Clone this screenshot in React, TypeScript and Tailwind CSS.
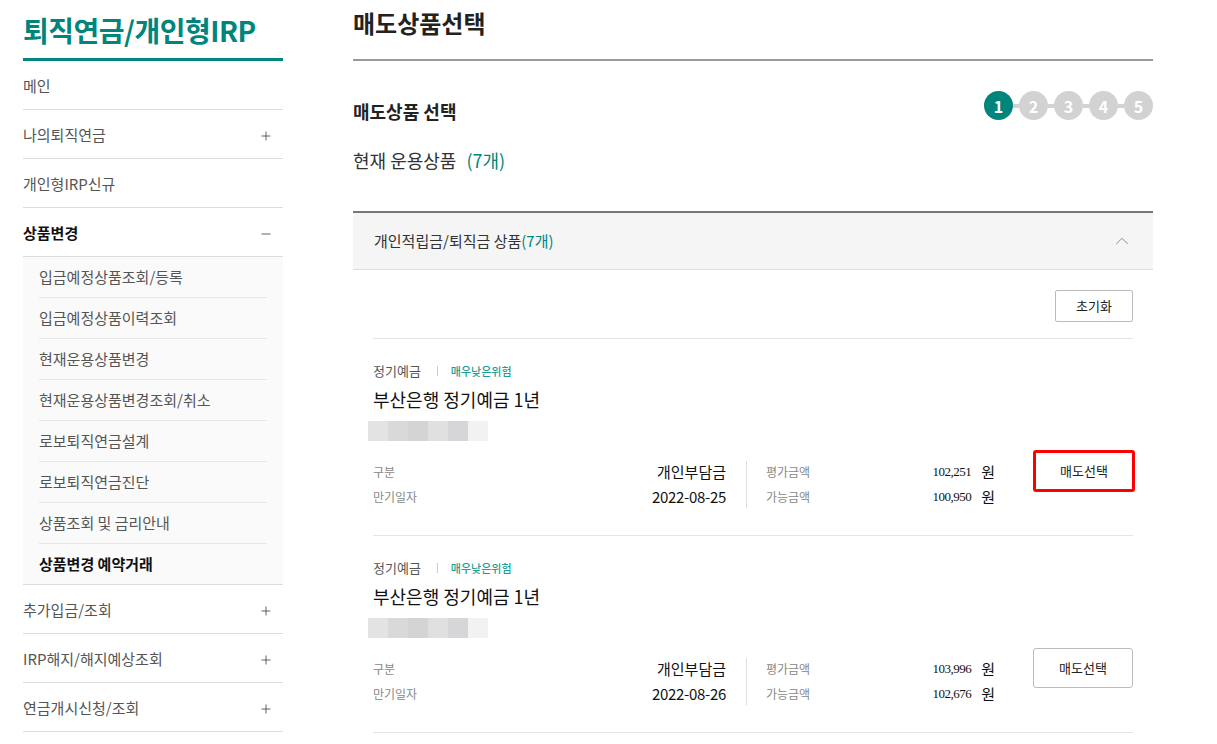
import { Plus, Minus, ChevronUp } from 'lucide-react';

const font = { fontFamily: '"Noto Sans CJK KR", "Noto Sans", sans-serif' };

const topMenu = [
  { label: '메인', icon: null },
  { label: '나의퇴직연금', icon: 'plus' },
  { label: '개인형IRP신규', icon: null },
];

const subMenu = [
  '입금예정상품조회/등록',
  '입금예정상품이력조회',
  '현재운용상품변경',
  '현재운용상품변경조회/취소',
  '로보퇴직연금설계',
  '로보퇴직연금진단',
  '상품조회 및 금리안내',
  '상품변경 예약거래',
];

const bottomMenu = ['추가입금/조회', 'IRP해지/해지예상조회', '연금개시신청/조회'];

const products = [
  { date: '2022-08-25', evalAmt: '102,251', availAmt: '100,950', highlight: true },
  { date: '2022-08-26', evalAmt: '103,996', availAmt: '102,676', highlight: false },
];

const blur = ['bg-[#e3e3e3]', 'bg-[#d9d9d9]', 'bg-[#d4d4d4]', 'bg-[#e0e0e0]', 'bg-[#d6d6d8]', 'bg-[#f1f2f1]'];

function MenuRow({ label, icon, bold }: { label: string; icon?: string | null; bold?: boolean }) {
  return (
    <div className="flex h-[49px] items-center justify-between border-b border-[#dddddd] pr-[10px] pt-[3px]">
      <span className={bold ? 'text-[15px] font-bold text-[#111]' : 'text-[15px] text-[#555]'}>{label}</span>
      {icon === 'plus' && <Plus size={14} strokeWidth={1.3} className="text-[#333]" />}
      {icon === 'minus' && <Minus size={14} strokeWidth={1.3} className="text-[#333]" />}
    </div>
  );
}

function Sidebar() {
  return (
    <aside className="w-[260px] shrink-0">
      <h1 className="pt-[10px] text-[28px] font-bold leading-[40px] tracking-[-0.5px] text-[#00857d]">퇴직연금/개인형IRP</h1>
      <div className="mt-[8px] h-[3px] bg-[#00857d]" />
      {topMenu.map((m) => (
        <MenuRow key={m.label} label={m.label} icon={m.icon} />
      ))}
      <MenuRow label="상품변경" icon="minus" bold />
      <div className="border-b border-[#dddddd] bg-[#fafafa] px-[16px]">
        {subMenu.map((s, i) => (
          <div
            key={s}
            className={`flex items-center text-[15px] ${i < subMenu.length - 1 ? 'h-[41px] border-b border-[#e6e6e6] text-[#555]' : 'h-[40px] font-bold text-[#111]'}`}
          >
            {s}
          </div>
        ))}
      </div>
      {bottomMenu.map((m) => (
        <MenuRow key={m} label={m} icon="plus" />
      ))}
    </aside>
  );
}

function Steps() {
  return (
    <div className="flex items-center">
      {[1, 2, 3, 4, 5].map((n, i) => (
        <div key={n} className="flex items-center">
          {i > 0 && <div className="h-[4px] w-[6px] bg-[#d2d2d2]" />}
          <div
            className={`flex h-[29px] w-[29px] items-center justify-center rounded-full text-[16px] font-bold text-white ${n === 1 ? 'bg-[#00857d]' : 'bg-[#d2d2d2]'}`}
          >
            {n}
          </div>
        </div>
      ))}
    </div>
  );
}

function Product({ date, evalAmt, availAmt, highlight }: (typeof products)[number]) {
  return (
    <div className="flex h-[197px] flex-col border-b border-[#e5e5e5] pt-[22px]">
      <div className="flex items-center text-[13px] leading-[20px]">
        <span className="text-[#555]">정기예금</span>
        <span className="ml-[16px] mr-[13px] h-[10px] w-px bg-[#cccccc]" />
        <span className="text-[11px] font-medium text-[#1a9f93]">매우낮은위험</span>
      </div>
      <div className="mt-[5px] text-[18px] leading-[26px] text-[#111]">부산은행 정기예금 1년</div>
      <div className="ml-[-5px] mt-[9px] flex h-[20px]">
        {blur.map((b, i) => (
          <div key={i} className={`h-[20px] w-[20px] ${b}`} />
        ))}
      </div>
      <div className="mt-[20px] flex items-start">
        <div className="flex w-[374px] flex-col gap-[5px] border-r border-[#dddddd] py-[1px] pr-[20px]">
          <div className="flex h-[20px] items-center justify-between">
            <span className="text-[12px] text-[#888]">구분</span>
            <span className="text-[15px] text-[#111]">개인부담금</span>
          </div>
          <div className="flex h-[20px] items-center justify-between">
            <span className="text-[12px] text-[#888]">만기일자</span>
            <span className="text-[15px] tracking-[-0.3px] text-[#111]">{date}</span>
          </div>
        </div>
        <div className="flex w-[248px] flex-col gap-[5px] py-[1px] pl-[19px]">
          <div className="flex h-[20px] items-center">
            <span className="text-[12px] text-[#888]">평가금액</span>
            <span className="ml-auto text-[13px] tracking-[-0.5px] text-[#111]" style={{ fontFamily: '"Liberation Serif", serif' }}>{evalAmt}</span>
            <span className="ml-[10px] text-[15px] text-[#111]">원</span>
          </div>
          <div className="flex h-[20px] items-center">
            <span className="text-[12px] text-[#888]">가능금액</span>
            <span className="ml-auto text-[13px] tracking-[-0.5px] text-[#111]" style={{ fontFamily: '"Liberation Serif", serif' }}>{availAmt}</span>
            <span className="ml-[10px] text-[15px] text-[#111]">원</span>
          </div>
        </div>
        <div className={highlight ? 'ml-auto mr-[-2px] mt-[-11px]' : 'ml-auto mt-[-10px]'}>
          <button
            className={`flex items-center justify-center rounded-[3px] bg-white text-[13px] text-[#222] ${highlight ? 'h-[42px] w-[102px] border-[3px] border-[#ff0000]' : 'h-[40px] w-[100px] border border-[#bbbbbb]'}`}
          >
            매도선택
          </button>
        </div>
      </div>
    </div>
  );
}

export default function App() {
  return (
    <div className="flex min-h-[744px] gap-[70px] bg-white pl-[23px]" style={font}>
      <Sidebar />
      <main className="w-[800px] shrink-0">
        <h2 className="pt-[6px] text-[24px] font-bold leading-[34px] text-[#222]">매도상품선택</h2>
        <div className="mt-[19px] h-[2px] bg-[#999999]" />
        <div className="mt-[30px] flex items-start justify-between">
          <h3 className="mt-[7px] text-[18px] font-bold leading-[27px] text-[#222]">매도상품 선택</h3>
          <Steps />
        </div>
        <div className="mt-[22px] text-[18px] leading-[27px] text-[#333]">
          현재 운용상품 <span className="ml-[6px] text-[#00857d]">(7개)</span>
        </div>
        <div className="mt-[37px] border-t-2 border-[#777777]">
          <div className="flex h-[57px] items-center justify-between border-b border-[#dddddd] bg-[#f5f5f5] pl-[21px] pr-[20px]">
            <span className="text-[15px] text-[#333]">
              개인적립금/퇴직금 상품<span className="text-[#00857d]">(7개)</span>
            </span>
            <ChevronUp size={22} strokeWidth={1} className="text-[#888]" />
          </div>
          <div className="px-[20px]">
            <div className="flex justify-end border-b border-[#e5e5e5] pb-[16px] pt-[20px]">
              <button className="h-[32px] w-[78px] rounded-[2px] border border-[#bbbbbb] bg-white text-[13px] text-[#222]">초기화</button>
            </div>
            {products.map((p) => (
              <Product key={p.date} {...p} />
            ))}
          </div>
        </div>
      </main>
    </div>
  );
}
